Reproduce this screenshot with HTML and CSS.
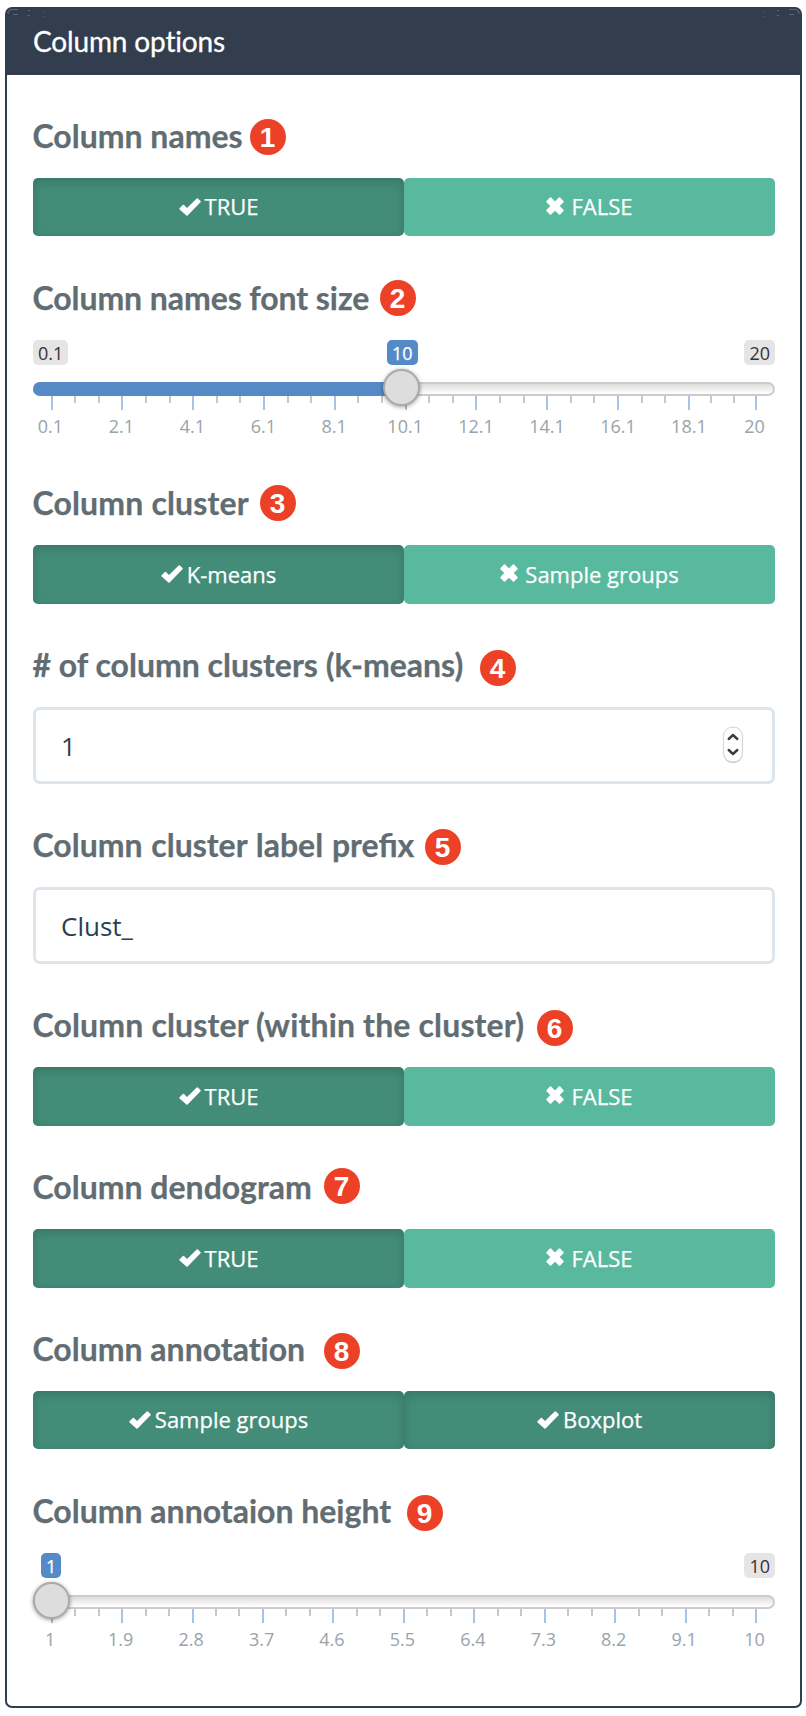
FILE: index.html
```html
<!DOCTYPE html>
<html lang="en">
<head>
<meta charset="utf-8">
<title>Column options</title>
<link rel="stylesheet" href="styles.css">
</head>
<body>
<svg class="defs" width="0" height="0" aria-hidden="true">
  <symbol id="check" viewBox="0 0 22 18"><path d="M0.6 10.3 3.8 7.1Q4.4 6.5 5 7.1L8 10.1 17.7.5Q18.3-.1 18.9.5L21.5 3.1Q22.1 3.7 21.5 4.3L8.6 17.5Q8 18.1 7.4 17.5L.6 11.5Q0 10.9.6 10.3Z"/></symbol>
  <symbol id="cross" viewBox="0 0 18 18"><path d="M.4 4.2 3.9.5Q4.5 0 5.1.5L9 4.4 12.9.5Q13.5 0 14.1.5L17.6 4.2Q18 4.8 17.6 5.2L13.7 9 17.6 12.9Q18 13.5 17.6 14L14.1 17.5Q13.5 18 12.9 17.5L9 13.7 5.1 17.5Q4.5 18 3.9 17.5L.4 14Q0 13.5.4 12.9L4.3 9 .4 5.2Q0 4.8.4 4.2Z"/></symbol>
</svg>
<section class="panel">
  <header class="panel-head">
    <svg class="spark" width="40" height="10" viewBox="0 0 40 10"><path d="M1 5Q1 1 4 .5H11M6 5.500h5M21 1.500h2M21 6.500h2M36 2.500h1M36 7.500h1"/></svg>
    <h1>Column options</h1>
    <svg class="spark spark-right" width="40" height="10" viewBox="0 0 40 10"><path d="M1 5Q1 1 4 .5H11M6 5.500h5M21 1.500h2M21 6.500h2M36 2.500h1M36 7.500h1"/></svg>
  </header>
  <div class="panel-body">
    <div class="group">
      <div class="label"><span>Column names</span><b class="badge b1">1</b></div>
      <div class="toggle first">
        <button class="btn on"><svg class="check"><use href="#check"/></svg>TRUE</button>
        <button class="btn"><svg class="cross"><use href="#cross"/></svg>FALSE</button>
      </div>
    </div>
    <div class="group slider-group">
      <div class="label"><span class="snug">Column names font size</span><b class="badge b2">2</b></div>
      <div class="slider">
        <div class="tags"><span class="tag">0.1</span><span class="tag">20</span><span class="tag value at-mid">10</span></div>
        <div class="track"><div class="fill"></div><div class="handle at-mid-handle"></div></div>
        <svg class="ticks" width="742" height="14" shape-rendering="crispEdges">
          <path class="minor" d="M42 0V7M66 0V7M113 0V7M136.500 0V7M184 0V7M207 0V7M254.500 0V7M278 0V7M325 0V7M349 0V7M396 0V7M420 0V7M467 0V7M490.500 0V7M538 0V7M561 0V7M608.500 0V7M632 0V7M678 0V7M700.500 0V7"/>
          <path class="major" d="M18.500 0V14M89 0V14M160 0V14M231 0V14M302 0V14M372.500 0V14M443 0V14M514 0V14M585 0V14M656 0V14M723 0V14"/>
        </svg>
        <div class="scale scale-a"><span>0.1</span><span>2.1</span><span>4.1</span><span>6.1</span><span>8.1</span><span>10.1</span><span>12.1</span><span>14.1</span><span>16.1</span><span>18.1</span><span>20</span></div>
      </div>
    </div>
    <div class="group">
      <div class="label"><span class="loose">Column cluster</span><b class="badge b3">3</b></div>
      <div class="toggle">
        <button class="btn on"><svg class="check"><use href="#check"/></svg>K-means</button>
        <button class="btn"><svg class="cross"><use href="#cross"/></svg>Sample groups</button>
      </div>
    </div>
    <div class="group input-group">
      <div class="label"><span># of column clusters (k-means)</span><b class="badge b4">4</b></div>
      <div class="field"><span>1</span>
        <svg class="spinner" width="22" height="40" viewBox="0 0 22 40"><rect class="spin-shadow" x="1.500" y="3" width="19" height="35" rx="9"/><rect class="spin-box" x="1.500" y="2" width="19" height="35" rx="9"/><path d="M6.700 14 11 10 15.300 14M6.700 25 11 29 15.300 25"/></svg>
      </div>
    </div>
    <div class="group input-group">
      <div class="label"><span class="wide-words">Column cluster label prefix</span><b class="badge b5">5</b></div>
      <div class="field"><span>Clust_</span></div>
    </div>
    <div class="group">
      <div class="label"><span class="loose">Column cluster (within the cluster)</span><b class="badge b6">6</b></div>
      <div class="toggle">
        <button class="btn on"><svg class="check"><use href="#check"/></svg>TRUE</button>
        <button class="btn"><svg class="cross"><use href="#cross"/></svg>FALSE</button>
      </div>
    </div>
    <div class="group">
      <div class="label"><span>Column dendogram</span><b class="badge b7">7</b></div>
      <div class="toggle">
        <button class="btn on"><svg class="check"><use href="#check"/></svg>TRUE</button>
        <button class="btn"><svg class="cross"><use href="#cross"/></svg>FALSE</button>
      </div>
    </div>
    <div class="group">
      <div class="label"><span class="no-liga">Column annotation</span><b class="badge b8">8</b></div>
      <div class="toggle first">
        <button class="btn on"><svg class="check"><use href="#check"/></svg>Sample groups</button>
        <button class="btn on"><svg class="check"><use href="#check"/></svg>Boxplot</button>
      </div>
    </div>
    <div class="group slider-group">
      <div class="label"><span>Column annotaion height</span><b class="badge b9">9</b></div>
      <div class="slider">
        <div class="tags tags-end"><span class="tag">10</span><span class="tag value at-start">1</span></div>
        <div class="track"><div class="handle"></div></div>
        <svg class="ticks" width="742" height="14" shape-rendering="crispEdges">
          <path class="minor" d="M42 0V7M65.500 0V7M112.500 0V7M136 0V7M183 0V7M206 0V7M253 0V7M277 0V7M324 0V7M347 0V7M394 0V7M418 0V7M464.500 0V7M488 0V7M535 0V7M558.500 0V7M605.500 0V7M629 0V7M676 0V7M699.500 0V7"/>
          <path class="major" d="M18.500 0V14M89 0V14M159.500 0V14M230 0V14M300 0V14M371 0V14M441 0V14M511.500 0V14M582 0V14M652.500 0V14M723 0V14"/>
        </svg>
        <div class="scale scale-b"><span>1</span><span>1.9</span><span>2.8</span><span>3.7</span><span>4.6</span><span>5.5</span><span>6.4</span><span>7.3</span><span>8.2</span><span>9.1</span><span>10</span></div>
      </div>
    </div>
  </div>
</section>
</body>
</html>
```
FILE: styles.css
```css
* { box-sizing: border-box; }
body { margin: 0; padding: 7px 4px 8px 5px; background: #fff; font-family: "Open Sans", "Noto Sans", sans-serif; }
.defs { position: absolute; }
.panel { height: 1701px; border: 2px solid #2f3e50; border-radius: 7px; background: #fff; }
.panel-head { position: relative; height: 66px; padding: 0 26px; background: #323e4e; border-radius: 4px 4px 0 0; }
.panel-head h1 { margin: 0; font: 400 28px/65px Lato, sans-serif; color: #fff; letter-spacing: -.15px; -webkit-text-stroke: .3px #fff; }
.spark { position: absolute; left: 0; top: 0; fill: none; stroke: #8793a0; stroke-width: .7; opacity: .7; }
.spark-right { left: auto; right: 0; transform: scaleX(-1); }
.panel-body { padding: 36px 25px 0 26px; }
.group { height: 162px; }
.slider-group { height: 205px; }
.input-group { height: 180px; }
.label { position: relative; height: 67px; font: 700 32px/49px Lato, sans-serif; color: #616d72; white-space: nowrap; }
.label > span { margin-left: -.5px; -webkit-text-stroke: .25px #616d72; }
.snug { letter-spacing: -.08px; }
.loose { letter-spacing: .15px; }
.wide-words { word-spacing: 1px; }
.no-liga { font-variant-ligatures: none; }
.badge { position: absolute; width: 36px; height: 36px; padding-right: 1px; border-radius: 50%; background: #ed4127; color: #fff; font: 700 28px/37px "Liberation Sans", Arial, sans-serif; text-align: center; }
.b1 { left: 217px; top: 8px; }
.b2 { left: 347px; top: 7px; }
.b3 { left: 227px; top: 7px; }
.b4 { left: 447px; top: 10px; }
.b5 { left: 392px; top: 9px; }
.b6 { left: 504px; top: 10px; }
.b7 { left: 291px; top: 6px; }
.b8 { left: 291px; top: 9px; }
.b9 { left: 374px; top: 9px; }
.toggle { display: flex; height: 59px; }
.toggle.first { height: 58px; }
.btn { flex: 1; display: flex; align-items: center; justify-content: center; gap: 4px; border: 0; padding: 0 0 2px; border-radius: 5px; background: #59b99f; color: #fff; font: 400 22px/30px "Open Sans", sans-serif; -webkit-text-stroke: .25px #fff; }
.btn.on { background: #438d78; box-shadow: inset 0 3px 8px 2px rgba(0,0,0,.14); }
.check, .cross { flex: none; height: 18px; fill: #fff; stroke: none; }
.check { width: 22px; margin-top: 1px; }
.cross { width: 18px; margin-right: 3px; margin-top: -1px; }
.field { display: flex; justify-content: space-between; height: 77px; padding: 0 28px 0 25px; border: 3px solid #dce4ec; border-radius: 7px; color: #2c3e50; font-size: 26px; line-height: 73px; }
.spinner { margin-top: 15px; fill: none; stroke: #3c3c3c; stroke-width: 2.4; stroke-linecap: round; stroke-linejoin: round; }
.spin-box { fill: #fff; stroke: #d2d2d2; stroke-width: 1; }
.spin-shadow { fill: #bbb; stroke: none; }
.tags { position: relative; display: flex; justify-content: space-between; height: 42px; align-items: flex-start; }
.tags-end { justify-content: flex-end; }
.tag { height: 25px; padding: 0 5px; border-radius: 5px; background: #e5e5e5; color: #333; font-size: 18px; line-height: 27px; }
.tag.value { position: absolute; top: 0; background: #548ac6; color: #fff; -webkit-text-stroke: .25px #fff; }
.at-mid { left: 354px; }
.at-start { left: 8px; }
.track { position: relative; height: 14px; border: 2px solid #ccc; border-radius: 7px; background: linear-gradient(#dedede, #fff); }
.fill { width: 369px; height: 14px; margin: -2px; border-radius: 7px 0 0 7px; background: #548ac6; }
.handle { position: absolute; left: -2px; top: -15px; width: 37px; height: 37px; border: 2px solid #aaa; border-radius: 50%; background: #ddd; box-shadow: 0 1px 4px rgba(0,0,0,.4); z-index: 1; }
.at-mid-handle { left: 348px; }
.ticks { display: block; fill: none; }
.minor { stroke: #c8c8c8; stroke-width: 2; }
.major { stroke: #a8c3e3; stroke-width: 2; }
.scale { display: grid; justify-items: center; font-size: 18px; line-height: 24px; color: #99a3aa; padding-top: 4px; }
.scale-a { grid-template-columns: repeat(10, 70.95px) 60.4px; margin-left: -18px; }
.scale-b { grid-template-columns: repeat(11, 70.45px); margin: 0 -20px 0 -18px; }
```
